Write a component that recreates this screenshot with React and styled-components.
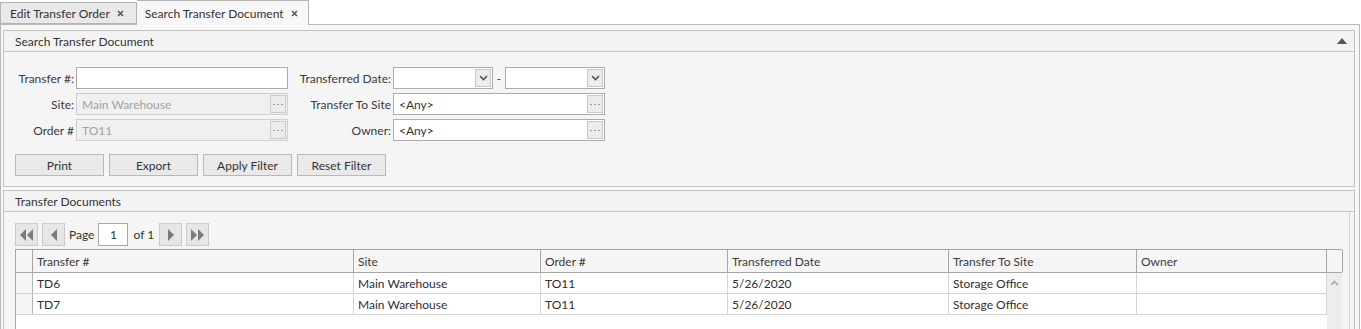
import { styled, createGlobalStyle } from "styled-components"

const GlobalStyle = createGlobalStyle`
  body {
    margin: 0;
    background: #ffffff;
    font-family: "Segoe UI", Lato, "Noto Sans", sans-serif;
    font-size: 12px;
    color: #2f2f2f;
  }
  * { box-sizing: border-box; }
`

const columns = [
  { title: "Transfer #", width: 321, key: "doc" },
  { title: "Site", width: 187, key: "site" },
  { title: "Order #", width: 187, key: "order" },
  { title: "Transferred Date", width: 221, key: "date" },
  { title: "Transfer To Site", width: 188, key: "to" },
  { title: "Owner", width: 190, key: "owner" }
]

const rows = [
  { doc: "TD6", site: "Main Warehouse", order: "TO11", date: "5/26/2020", to: "Storage Office", owner: "" },
  { doc: "TD7", site: "Main Warehouse", order: "TO11", date: "5/26/2020", to: "Storage Office", owner: "" }
]

const template = "17px " + columns.map((c) => c.width + "px").join(" ")

const Page = styled.div`
  width: 1361px;
  height: 329px;
  overflow: hidden;
`

const TabStrip = styled.div`
  height: 24px;
  display: flex;
  align-items: flex-end;
  position: relative;
  z-index: 1;
`

const Tab = styled.div`
  height: ${(p) => (p.$active ? "25px" : "22px")};
  margin-bottom: ${(p) => (p.$active ? "-1px" : "0")};
  display: flex;
  align-items: center;
  gap: 7px;
  padding: 0 ${(p) => (p.$active ? "10px" : "12px")} 0 ${(p) => (p.$active ? "8px" : "9px")};
  background: ${(p) => (p.$active ? "#f7f7f7" : "#e9e9e9")};
  border: 1px solid #b4b4b4;
  border-bottom: ${(p) => (p.$active ? "none" : "1px solid #b4b4b4")};
  border-left: ${(p) => (p.$active ? "none" : "1px solid #b4b4b4")};
  color: #333333;
  white-space: nowrap;
`

const Close = () => (
  <svg width="7" height="7" viewBox="0 0 7 7">
    <path d="M1 1 L6 6 M6 1 L1 6" stroke="#555" strokeWidth="1.5" />
  </svg>
)

const Frame = styled.div`
  width: 1360px;
  height: 305px;
  border: 1px solid #b9b9b9;
  border-bottom: none;
  background: #f7f7f7;
  padding: 5px 4px 0 2px;
  display: flex;
  flex-direction: column;
  gap: 3px;
`

const Panel = styled.section`
  border: 1px solid #c2c2c2;
  border-bottom: ${(p) => (p.$open ? "none" : "1px solid #c2c2c2")};
  background: #f5f5f5;
  display: flex;
  flex-direction: column;
  flex: ${(p) => (p.$grow ? "1" : "none")};
  min-height: 0;
`

const PanelHeader = styled.div`
  height: 21px;
  display: flex;
  align-items: center;
  justify-content: space-between;
  padding: 0 7px 0 11px;
  border-bottom: 1px solid #c2c2c2;
  background: #f3f3f3;
  color: #333333;
`

const FilterBody = styled.div`
  padding: 15px 0 10px 11px;
  display: flex;
  flex-direction: column;
  gap: 13px;
`

const FormGrid = styled.div`
  display: grid;
  grid-template-columns: 61px 212px 105px 212px;
  grid-auto-rows: 22px;
  row-gap: 4px;
  align-items: center;
`

const Label = styled.label`
  text-align: right;
  padding-right: 2px;
  color: #3a3a3a;
  white-space: nowrap;
`

const Field = styled.div`
  height: 22px;
  width: ${(p) => p.$w || "212px"};
  border: 1px solid ${(p) => (p.$disabled ? "#cfcfcf" : "#ababab")};
  background: ${(p) => (p.$disabled ? "#f0f0f0" : "#ffffff")};
  color: ${(p) => (p.$disabled ? "#a2a2a2" : "#333333")};
  display: flex;
  align-items: center;
  justify-content: space-between;
  padding: 0 1px 0 5px;
`

const SideButton = styled.span`
  width: 16px;
  height: 18px;
  border: 1px solid #c9c9c9;
  background: #ececec;
  display: flex;
  align-items: center;
  justify-content: center;
`

const DateRange = styled.div`
  display: flex;
  align-items: center;
`

const Dash = styled.span`
  width: 12px;
  text-align: center;
  color: #444444;
`

const ButtonRow = styled.div`
  display: flex;
  gap: 5px;
`

const Button = styled.button`
  width: 89px;
  height: 22px;
  border: 1px solid #b8b8b8;
  background: #e9e9e9;
  font: inherit;
  color: #333333;
  padding: 0;
`

const DocsBody = styled.div`
  flex: 1;
  min-height: 0;
  padding: 11px 0 0 11px;
  margin-right: 4px;
  border-right: 1px solid #d6d6d6;
  display: flex;
  flex-direction: column;
  gap: 3px;
`

const Pager = styled.div`
  height: 23px;
  display: flex;
  align-items: center;
  gap: 4px;
`

const PagerButton = styled.span`
  width: 23px;
  height: 23px;
  border: 1px solid #cccccc;
  background: #e6e6e6;
  display: flex;
  align-items: center;
  justify-content: center;
`

const PagerText = styled.span`
  color: #333333;
  padding: 0 ${(p) => p.$pad || "0"};
`

const PageInput = styled.span`
  width: 30px;
  height: 23px;
  border: 1px solid #a9a9a9;
  background: #ffffff;
  display: flex;
  align-items: center;
  justify-content: center;
`

const Grid = styled.div`
  width: 1327px;
  flex: 1;
  border-left: 1px solid #a6a6a6;
  border-top: 1px solid #a6a6a6;
  background: #ffffff;
  display: flex;
  flex-direction: column;
`

const HeaderRow = styled.div`
  display: grid;
  grid-template-columns: ${template} 16px;
  height: 23px;
  background: #f5f5f5;
  border-bottom: 1px solid #a6a6a6;
`

const HeadCell = styled.div`
  border-right: 1px solid #a6a6a6;
  padding-left: 4px;
  display: flex;
  align-items: center;
  color: #3a3a3a;
  white-space: nowrap;
`

const GridBody = styled.div`
  flex: 1;
  display: flex;
`

const RowsArea = styled.div`
  flex: 1;
`

const Row = styled.div`
  display: grid;
  grid-template-columns: ${template};
  height: 21px;
  border-bottom: 1px solid #d4d4d4;
`

const Cell = styled.div`
  border-right: 1px solid #d4d4d4;
  padding-left: 4px;
  display: flex;
  align-items: center;
  white-space: nowrap;
  background: ${(p) => (p.$indicator ? "#f5f5f5" : "#ffffff")};
  ${(p) => p.$indicator && "border-right-color: #b4b4b4;"}
`

const ScrollTrack = styled.div`
  width: 16px;
  background: #ededed;
  display: flex;
  justify-content: center;
  padding-top: 7px;
`

const Tri = ({ dir = "left", double }) => {
  const one = dir === "left" ? "M7 1 L7 13 L1 7 Z" : "M1 1 L1 13 L7 7 Z"
  const two = dir === "left" ? "M14 1 L14 13 L8 7 Z" : "M8 1 L8 13 L14 7 Z"
  return (
    <svg width={double ? 15 : 8} height="14" viewBox={double ? "0 0 15 14" : "0 0 8 14"}>
      <path d={one} fill="#7b7b7b" />
      {double && <path d={two} fill="#7b7b7b" />}
    </svg>
  )
}

const Chevron = () => (
  <svg width="9" height="6" viewBox="0 0 9 6">
    <path d="M1 1 L4.5 4.5 L8 1" stroke="#555" strokeWidth="1.6" fill="none" />
  </svg>
)

const Dots = () => (
  <svg width="10" height="3" viewBox="0 0 10 3">
    <rect x="0" y="1" width="2" height="1" fill="#9a9a9a" />
    <rect x="4" y="1" width="2" height="1" fill="#9a9a9a" />
    <rect x="8" y="1" width="2" height="1" fill="#9a9a9a" />
  </svg>
)

function App() {
  return (
    <Page>
      <GlobalStyle />
      <TabStrip>
        <Tab>Edit Transfer Order <Close /></Tab>
        <Tab $active>Search Transfer Document <Close /></Tab>
      </TabStrip>
      <Frame>
        <Panel>
          <PanelHeader>
            Search Transfer Document
            <svg width="10" height="6" viewBox="0 0 10 6"><path d="M0 6 L5 0 L10 6 Z" fill="#555" /></svg>
          </PanelHeader>
          <FilterBody>
            <FormGrid>
              <Label>Transfer #:</Label>
              <Field />
              <Label>Transferred Date:</Label>
              <DateRange>
                <Field $w="100px">
                  <span />
                  <SideButton><Chevron /></SideButton>
                </Field>
                <Dash>-</Dash>
                <Field $w="100px">
                  <span />
                  <SideButton><Chevron /></SideButton>
                </Field>
              </DateRange>

              <Label>Site:</Label>
              <Field $disabled>
                Main Warehouse
                <SideButton><Dots /></SideButton>
              </Field>
              <Label>Transfer To Site</Label>
              <Field>
                &lt;Any&gt;
                <SideButton><Dots /></SideButton>
              </Field>

              <Label>Order #</Label>
              <Field $disabled>
                TO11
                <SideButton><Dots /></SideButton>
              </Field>
              <Label>Owner:</Label>
              <Field>
                &lt;Any&gt;
                <SideButton><Dots /></SideButton>
              </Field>
            </FormGrid>
            <ButtonRow>
              <Button>Print</Button>
              <Button>Export</Button>
              <Button>Apply Filter</Button>
              <Button>Reset Filter</Button>
            </ButtonRow>
          </FilterBody>
        </Panel>

        <Panel $grow $open>
          <PanelHeader>Transfer Documents</PanelHeader>
          <DocsBody>
            <Pager>
              <PagerButton><Tri dir="left" double /></PagerButton>
              <PagerButton><Tri dir="left" /></PagerButton>
              <PagerText>Page</PagerText>
              <PageInput>1</PageInput>
              <PagerText $pad="1px">of 1</PagerText>
              <PagerButton><Tri dir="right" /></PagerButton>
              <PagerButton><Tri dir="right" double /></PagerButton>
            </Pager>
            <Grid>
              <HeaderRow>
                <HeadCell />
                {columns.map((c) => (
                  <HeadCell key={c.key}>{c.title}</HeadCell>
                ))}
                <HeadCell />
              </HeaderRow>
              <GridBody>
                <RowsArea>
                  {rows.map((r) => (
                    <Row key={r.doc}>
                      <Cell $indicator />
                      {columns.map((c) => (
                        <Cell key={c.key}>{r[c.key]}</Cell>
                      ))}
                    </Row>
                  ))}
                </RowsArea>
                <ScrollTrack>
                  <svg width="9" height="6" viewBox="0 0 9 6">
                    <path d="M1 5 L4.5 1.5 L8 5" stroke="#a8a8a8" strokeWidth="1.6" fill="none" />
                  </svg>
                </ScrollTrack>
              </GridBody>
            </Grid>
          </DocsBody>
        </Panel>
      </Frame>
    </Page>
  )
}

export default App
